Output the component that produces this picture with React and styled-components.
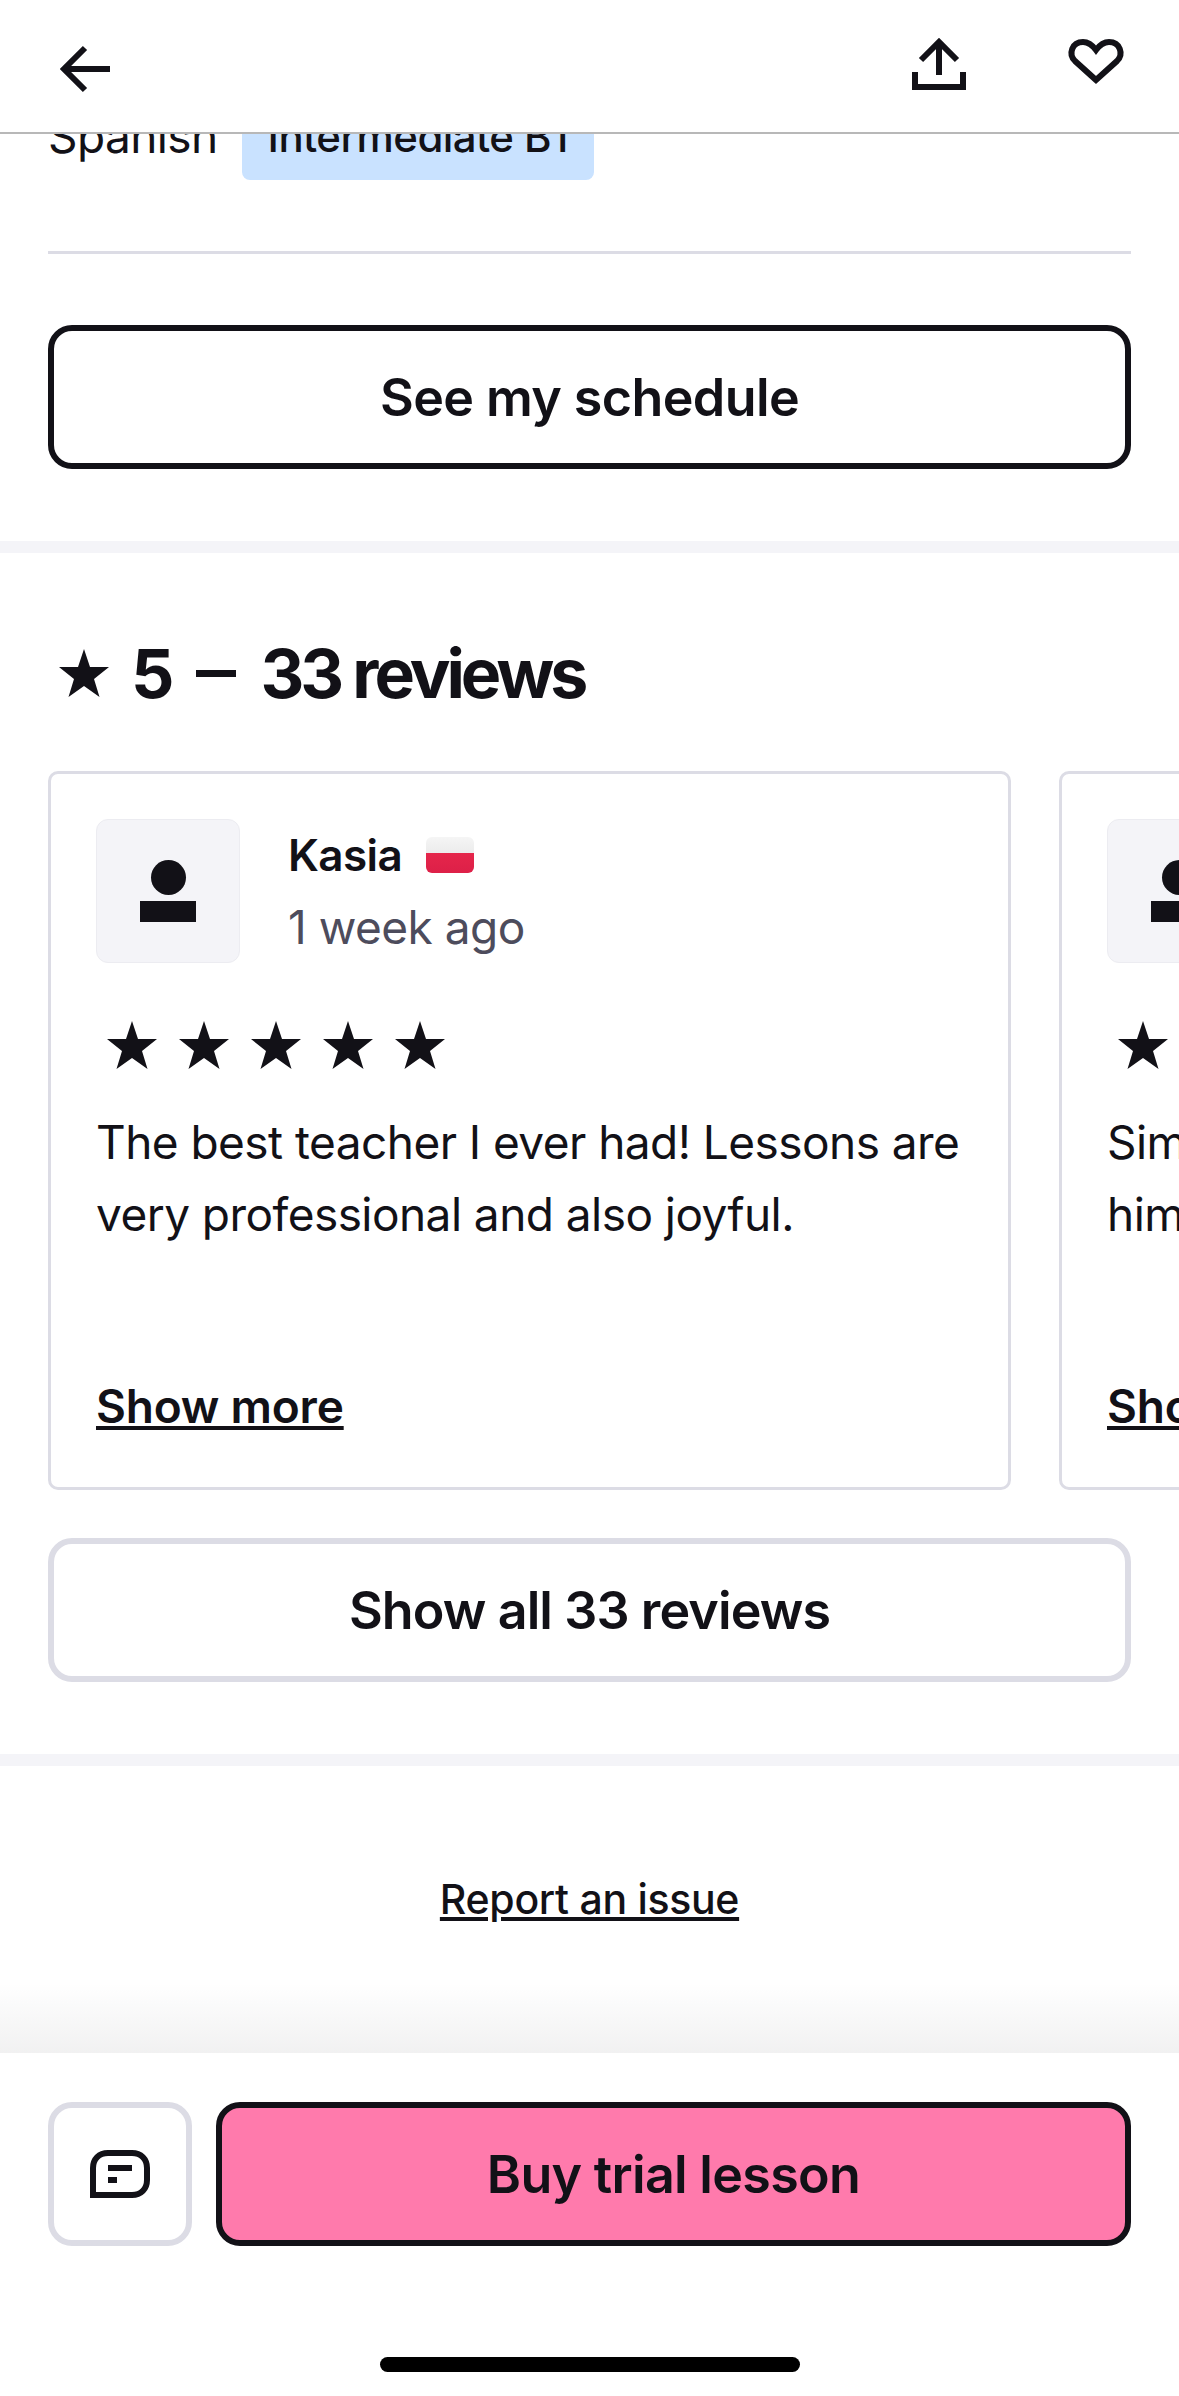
import styled, { createGlobalStyle } from "styled-components";

const GlobalStyle = createGlobalStyle`
  * {
    box-sizing: border-box;
  }
  body {
    margin: 0;
    background: #ffffff;
    color: #121117;
    font-family: "Inter", "Lato", sans-serif;
  }
`;

const Star = ({ size = 50 }) => (
  <svg width={size} height={size} viewBox="0 0 50 50" fill="#121117">
    <polygon points="25,1 31,19 50,19 35,31 40.5,49 25,38 9.5,49 15,31 0,19 19,19" />
  </svg>
);

const Review = ({ name, flag, ago, children }) => (
  <Card>
    <ReviewerRow>
      <Avatar>
        <AvatarHead />
        <AvatarBody />
      </Avatar>
      <div>
        <NameRow>
          <Name>{name}</Name>
          {flag && <Flag />}
        </NameRow>
        <Ago>{ago}</Ago>
      </div>
    </ReviewerRow>
    <Stars>
      <Star />
      <Star />
      <Star />
      <Star />
      <Star />
    </Stars>
    <ReviewText>{children}</ReviewText>
    <ShowMore>Show more</ShowMore>
  </Card>
);

export default function App() {
  return (
    <Page>
      <GlobalStyle />
      <Header>
        <HeaderIcon viewBox="0 0 72 72">
          <path d="M62 41H17M37 20L16 41L37 62" />
        </HeaderIcon>
        <HeaderRight>
          <HeaderIcon viewBox="0 0 72 72">
            <path d="M36 47V15M18 32L36 14L54 32" />
            <path d="M12 44V59H60V44" />
          </HeaderIcon>
          <HeaderIcon viewBox="0 0 72 72">
            <path d="M37 52L16 33C9 26 13 14 24 14C30 14 34 18 37 22C40 18 44 14 50 14C61 14 65 26 58 33Z" />
          </HeaderIcon>
        </HeaderRight>
      </Header>
      <Main>
        <TopSection>
          <LanguageRow>
            <Language>Spanish</Language>
            <LevelTag>Intermediate B1</LevelTag>
          </LanguageRow>
          <Divider />
          <OutlineButton $dark>See my schedule</OutlineButton>
        </TopSection>
        <Band />
        <ReviewsSection>
          <Heading>
            <Star size={50} />
            <HeadingRating>5</HeadingRating>
            <HeadingDash />
            <HeadingCount>33 reviews</HeadingCount>
          </Heading>
          <Carousel>
            <Review name="Kasia" flag ago="1 week ago">
              The best teacher I ever had! Lessons are very professional and also joyful.
            </Review>
            <Review name="Simon" ago="2 weeks ago">
              Simply a great teacher, I really like
              <br />
              him and his lessons.
            </Review>
          </Carousel>
          <OutlineButton>Show all 33 reviews</OutlineButton>
        </ReviewsSection>
        <Band />
        <ReportRow>
          <ReportLink>Report an issue</ReportLink>
        </ReportRow>
      </Main>
      <Footer>
        <FooterActions>
          <ChatButton>
            <svg width="60" height="48" viewBox="0 0 60 48" fill="none">
              <path
                d="M3 45V18C3 9 9 3 18 3H42C51 3 57 9 57 18V30C57 39 51 45 42 45Z"
                stroke="#121117"
                strokeWidth="6"
              />
              <rect x="18" y="15" width="24" height="6" fill="#121117" />
              <rect x="18" y="27" width="9" height="6" fill="#121117" />
            </svg>
          </ChatButton>
          <BuyButton>Buy trial lesson</BuyButton>
        </FooterActions>
        <HomeIndicator />
      </Footer>
    </Page>
  );
}

const Page = styled.div`
  width: 1179px;
  height: 2396px;
  display: flex;
  flex-direction: column;
  overflow: hidden;
  background: #ffffff;
`;

const Header = styled.header`
  flex: none;
  height: 134px;
  padding: 28px 48px 0;
  display: flex;
  justify-content: space-between;
  align-items: flex-start;
  background: #ffffff;
  border-bottom: 2px solid #b8b8b8;
`;

const HeaderRight = styled.div`
  display: flex;
  gap: 84px;
`;

const HeaderIcon = styled.svg`
  width: 72px;
  height: 72px;
  fill: none;
  stroke: #121117;
  stroke-width: 6;
`;

const Main = styled.main`
  flex: 1;
  min-height: 0;
  overflow: hidden;
`;

const TopSection = styled.section`
  padding: 0 48px 72px;
`;

/* the page is scrolled here, so this row starts under the header */
const LanguageRow = styled.div`
  display: flex;
  align-items: flex-start;
  gap: 24px;
  margin-top: -34px;
`;

const Language = styled.span`
  font-size: 46px;
  line-height: 72px;
  letter-spacing: -0.6px;
`;

const LevelTag = styled.span`
  height: 73px;
  margin-top: 7px;
  padding: 0 26px 15px;
  display: flex;
  align-items: center;
  border-radius: 8px;
  background: #c9e2ff;
  font-size: 42px;
  font-weight: 500;
  letter-spacing: -0.6px;
`;

const Divider = styled.div`
  height: 3px;
  margin-top: 71px;
  background: #dcdce5;
`;

const OutlineButton = styled.div`
  height: 144px;
  display: flex;
  align-items: center;
  justify-content: center;
  border: 6px solid ${(props) => (props.$dark ? "#121117" : "#dcdce5")};
  border-radius: 24px;
  font-size: 52px;
  font-weight: 600;
  letter-spacing: ${(props) => (props.$dark ? "-0.6px" : "-0.9px")};
  margin-top: ${(props) => (props.$dark ? "71px" : "0")};
`;

const Band = styled.div`
  height: 12px;
  background: #f4f4f8;
`;

const ReviewsSection = styled.section`
  padding: 72px 48px;
`;

const Heading = styled.h2`
  margin: 6px 0 56px;
  height: 84px;
  display: flex;
  align-items: center;
  padding-left: 11px;
  font-size: 68px;
  font-weight: 700;
`;

const HeadingRating = styled.span`
  margin-left: 22px;
`;

const HeadingDash = styled.span`
  width: 40px;
  height: 7px;
  margin: 0 24px 0 22px;
  background: #121117;
`;

const HeadingCount = styled.span`
  letter-spacing: -4px;
`;

const Carousel = styled.div`
  display: flex;
  gap: 48px;
  margin-right: -48px;
  margin-bottom: 48px;
  overflow: hidden;
`;

const Card = styled.article`
  flex: none;
  width: 963px;
  height: 719px;
  padding: 45px;
  display: flex;
  flex-direction: column;
  border: 3px solid #dcdce5;
  border-radius: 10px;
`;

const ReviewerRow = styled.div`
  display: flex;
  gap: 48px;
`;

const Avatar = styled.div`
  flex: none;
  width: 144px;
  height: 144px;
  padding-top: 40px;
  display: flex;
  flex-direction: column;
  align-items: center;
  gap: 6px;
  border: 1px solid #ececf1;
  border-radius: 12px;
  background: #f4f4f8;
`;

const AvatarHead = styled.div`
  width: 35px;
  height: 35px;
  border-radius: 50%;
  background: #121117;
`;

const AvatarBody = styled.div`
  width: 56px;
  height: 21px;
  background: #121117;
`;

const NameRow = styled.div`
  height: 72px;
  display: flex;
  align-items: center;
  gap: 24px;
`;

const Name = styled.span`
  font-size: 44px;
  font-weight: 600;
  letter-spacing: -0.6px;
`;

const Flag = styled.span`
  width: 48px;
  height: 36px;
  border-radius: 6px;
  background: linear-gradient(#f5f5f5, #ececec 44%, #e5264b 44%, #dd2048);
`;

const Ago = styled.div`
  font-size: 46px;
  line-height: 72px;
  letter-spacing: -0.5px;
  color: #4d4c5c;
`;

const Stars = styled.div`
  margin-top: 57px;
  padding-left: 11px;
  display: flex;
  gap: 22px;
`;

const ReviewText = styled.p`
  flex: 1;
  margin: 36px 0 0;
  font-size: 46px;
  line-height: 72px;
  letter-spacing: -0.55px;
`;

const ShowMore = styled.span`
  font-size: 46px;
  line-height: 72px;
  font-weight: 600;
  letter-spacing: -0.2px;
  text-decoration: underline;
`;

const ReportRow = styled.div`
  padding-top: 97px;
  display: flex;
  justify-content: center;
`;

const ReportLink = styled.span`
  font-size: 41px;
  line-height: 72px;
  font-weight: 500;
  letter-spacing: -0.3px;
  text-decoration: underline;
`;

const Footer = styled.footer`
  position: relative;
  flex: none;
  height: 343px;
  padding: 49px 48px 0;
  background: #ffffff;

  &::before {
    content: "";
    position: absolute;
    left: 0;
    right: 0;
    top: -70px;
    height: 70px;
    background: linear-gradient(rgba(18, 17, 23, 0), rgba(18, 17, 23, 0.06));
  }
`;

const FooterActions = styled.div`
  display: flex;
  gap: 24px;
`;

const ChatButton = styled.div`
  flex: none;
  width: 144px;
  height: 144px;
  display: flex;
  align-items: center;
  justify-content: center;
  border: 6px solid #dcdce5;
  border-radius: 24px;
`;

const BuyButton = styled.div`
  flex: 1;
  height: 144px;
  display: flex;
  align-items: center;
  justify-content: center;
  border: 6px solid #121117;
  border-radius: 24px;
  background: #ff7aac;
  font-size: 52px;
  font-weight: 600;
  letter-spacing: -0.7px;
`;

const HomeIndicator = styled.div`
  width: 420px;
  height: 15px;
  margin: 111px auto 0;
  border-radius: 8px;
  background: #000000;
`;
